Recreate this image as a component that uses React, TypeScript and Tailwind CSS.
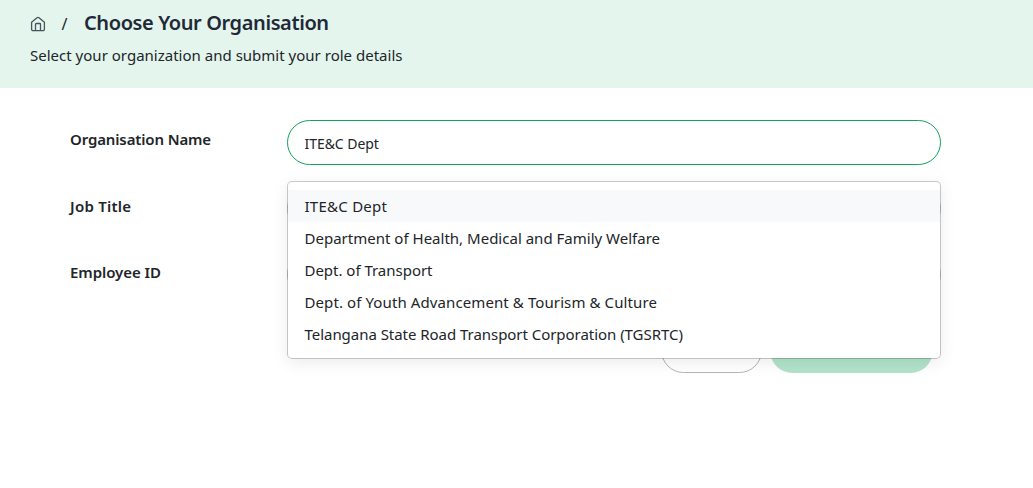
const organisations = [
  { name: 'ITE&C Dept', tracking: 'tracking-[0.25px]' },
  { name: 'Department of Health, Medical and Family Welfare', tracking: 'tracking-[0.01px]' },
  { name: 'Dept. of Transport', tracking: 'tracking-[-0.02px]' },
  { name: 'Dept. of Youth Advancement & Tourism & Culture', tracking: 'tracking-[0.1px]' },
  { name: 'Telangana State Road Transport Corporation (TGSRTC)', tracking: 'tracking-[-0.04px]' },
];

function HomeIcon() {
  return (
    <svg width="16" height="16" viewBox="0 0 16 16" fill="none" stroke="#46545c" strokeWidth="1.3" strokeLinejoin="round" strokeLinecap="round">
      <path d="M1.6 6.2 7 1.7a1.6 1.6 0 0 1 2 0l5.4 4.5v7a1.4 1.4 0 0 1-1.4 1.4H3a1.4 1.4 0 0 1-1.4-1.4z" />
      <path d="M5.5 14.4V8.2a.7.7 0 0 1 .7-.7h3.6a.7.7 0 0 1 .7.7v6.2" />
    </svg>
  );
}

function Label({ text, className }: { text: string; className: string }) {
  return (
    <div className={`w-[217px] shrink-0 text-[15px] leading-6 font-semibold whitespace-nowrap text-[#212529] ${className}`}>
      {text}
    </div>
  );
}

export default function App() {
  return (
    <div className="h-[488px] w-[1033px] overflow-hidden bg-white font-['Noto_Sans',sans-serif] text-[#212529]">
      <header className="h-[88px] bg-[#e4f5ed] pl-[30px]">
        <div className="flex h-11 items-center pt-px">
          <span className="mt-[3px]"><HomeIcon /></span>
          <span className="ml-[15.5px] w-[22.5px] pt-0.5 text-[16px] leading-6">/</span>
          <h1 className="pt-px text-[20px] leading-7 font-semibold tracking-[-0.4px] whitespace-nowrap text-[#1f2937]">Choose Your Organisation</h1>
        </div>
        <p className="-mt-px text-[15px] leading-6 tracking-[0.01px] whitespace-nowrap">Select your organization and submit your role details</p>
      </header>

      <main className="w-[941px] pt-8 pl-[70px]">
        <div className="flex flex-col gap-[21px]">
          <div className="flex">
            <Label text="Organisation Name" className="pt-[7px] tracking-[-0.13px]" />
            <div className="relative h-[45px] flex-1">
              <div className="flex h-[45px] items-center rounded-full border border-[#12a35b] pt-px pr-4 pl-[16.5px]">
                <span className="text-[14px] tracking-[-0.05px]">ITE&amp;C Dept</span>
              </div>
              <ul className="absolute top-[61px] left-0 z-10 h-[178px] w-full rounded-[5px] border border-black/20 bg-white bg-clip-padding py-2 shadow-[0_4px_16px_rgba(0,0,0,0.08)]">
                {organisations.map((org, i) => (
                  <li key={org.name} className={`h-8 pr-4 pl-[16.5px] text-[15px] leading-8 whitespace-nowrap ${org.tracking} ${i === 0 ? 'bg-[#f8f9fb]' : ''}`}>
                    {org.name}
                  </li>
                ))}
              </ul>
            </div>
          </div>
          <div className="flex">
            <Label text="Job Title" className="pt-2 tracking-[0.25px]" />
            <div className="h-[45px] flex-1 rounded-full border border-[#c9cbd0]" />
          </div>
          <div className="flex">
            <Label text="Employee ID" className="pt-2 tracking-[-0.05px]" />
            <div className="h-[45px] flex-1 rounded-full border border-[#c9cbd0]" />
          </div>
        </div>
        <div className="mt-[31px] flex justify-end gap-2 pr-2">
          <button type="button" aria-label="Cancel" className="h-[45px] w-[101px] rounded-full border border-[#b5b5b5] bg-white" />
          <button type="button" aria-label="Submit" className="h-[45px] w-[163px] rounded-full bg-[#b2e3ca]" />
        </div>
      </main>
    </div>
  );
}
